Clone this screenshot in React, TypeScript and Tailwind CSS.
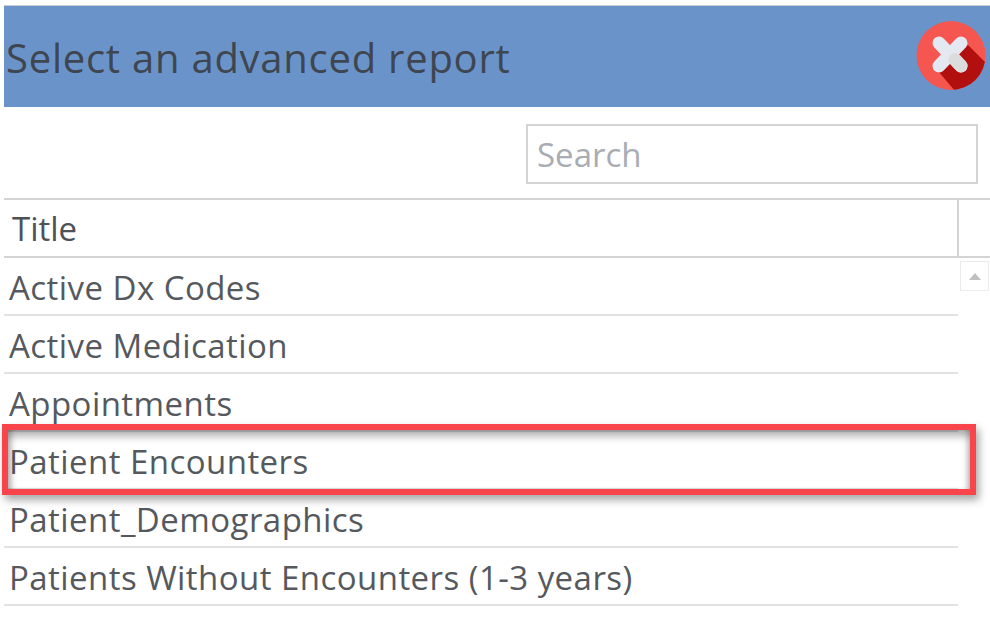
const rows = ["Active Dx Codes", "Active Medication", "Appointments", "Patient Encounters", "Patient_Demographics", "Patients Without Encounters (1-3 years)"];

export default function App() {
  return (
    <div className="relative w-[990px] h-[630px] overflow-hidden bg-white pt-[5px] pl-[4px] font-['Open_Sans','Liberation_Sans',sans-serif] text-[#5a5a5a]">
      <div className="flex h-[102px] items-center justify-between bg-[#6a94c9] border-t border-[#c9cdd2] pl-[2px] pr-[4px]">
        <span className="text-[40px] leading-none text-[#3f4650] tracking-[0.75px] pt-[2px]">Select an advanced report</span>
        <svg width="70" height="70" viewBox="0 0 70 70" className="mt-[-2px]">
          <defs>
            <clipPath id="c"><circle cx="35" cy="34.5" r="34.5" /></clipPath>
          </defs>
          <circle cx="35" cy="34.5" r="34.5" fill="#f5564f" />
          <path d="M52 24 L75 47 L70 75 L39 70 L22 50 Z" fill="#b20f0f" clipPath="url(#c)" />
          <path d="M23 22 L45 45" stroke="#e4e8f0" strokeWidth="13" strokeLinecap="round" />
          <path d="M45 22 L23 45" stroke="#e4e8f0" strokeWidth="13" strokeLinecap="round" />
          <path d="M39 38.5 L45 45" stroke="#dcdcdc" strokeWidth="13" strokeLinecap="round" />
        </svg>
      </div>
      <div className="flex h-[91px] justify-end pt-[17px] pr-[12px]">
        <div className="flex h-[60px] w-[452px] items-center border-2 border-[#d4d4d4] pl-[9px] pt-[2px] text-[33px] text-[#a9adb3]">Search</div>
      </div>
      <div className="flex h-[60px] border-y-2 border-[#d4d4d4]">
        <div className="flex w-[955px] items-center border-r-2 border-[#d4d4d4] pl-[8px] pt-[2px] text-[33px] text-[#4e5257]">Title</div>
      </div>
      <div className="flex">
        <div className="w-[954px]">
          {rows.map((r) => (
            <div key={r} className="flex h-[58px] items-center border-b-2 border-[#e2e2e2] pl-[5px] pt-[2px] text-[33px] tracking-[0.45px] leading-none text-[#55595e]">{r}</div>
          ))}
        </div>
        <div className="ml-[2px] mt-[3px] flex h-[30px] w-[29px] items-center justify-center border border-[#ececec]">
          <div className="h-0 w-0 border-x-[6px] border-b-[7px] border-x-transparent border-b-[#c0c0c0]" />
        </div>
      </div>
      <div className="absolute left-[2px] top-[424px] h-[71px] w-[974px] border-[6px] border-[#f8444a] shadow-[3px_5px_8px_rgba(0,0,0,0.35),inset_0_9px_8px_-3px_rgba(0,0,0,0.32),inset_-6px_0_6px_-4px_rgba(0,0,0,0.28),inset_7px_0_6px_-4px_rgba(0,0,0,0.28)]" />
    </div>
  );
}
